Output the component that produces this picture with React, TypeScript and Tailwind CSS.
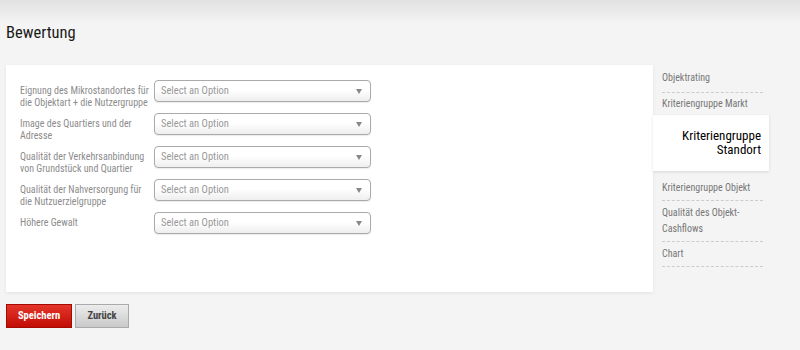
const rows = [
  'Eignung des Mikrostandortes für die Objektart + die Nutzergruppe',
  'Image des Quartiers und der Adresse',
  'Qualität der Verkehrsanbindung von Grundstück und Quartier',
  'Qualität der Nahversorgung für die Nutzuerzielgruppe',
  'Höhere Gewalt',
];

function SelectBox() {
  return (
    <div className="relative w-[217px] h-[22px] rounded-[4px] border border-[#aaa] bg-[linear-gradient(#ffffff,#ffffff_45%,#eeeeee)] shadow-[0_1px_1px_rgba(0,0,0,0.08)] flex items-center pl-[6px] text-[10.5px] text-[#999]">
      Select an Option
      <svg className="absolute right-[8px] top-[8px]" width="6" height="5" viewBox="0 0 6 5">
        <path d="M0 0h6L3 5z" fill="#888" />
      </svg>
    </div>
  );
}

export default function App() {
  return (
    <div className="min-h-[350px] bg-[linear-gradient(#e1e1e1,#f4f4f4_24px)] font-['Roboto_Condensed',sans-serif]">
      <h1 className="pl-[6px] pt-[22px] text-[16.5px] leading-[22px] text-[#1a1a1a]">Bewertung</h1>

      <div className="flex mt-[21px]">
        <div className="ml-[6px] w-[647px] h-[227px] bg-white shadow-[0_1px_3px_rgba(0,0,0,0.08)] pt-[15px] pl-[14px] flex flex-col gap-[11px]">
          {rows.map((label) => (
            <div key={label} className="flex h-[22px]">
              <div className="w-[134px] pt-[5px] text-[10px] leading-[12px] text-[#8c8c8c]">{label}</div>
              <SelectBox />
            </div>
          ))}
        </div>

        <div className="w-[116px] pl-[9px] text-[10px] text-[#777]">
          <div className="w-[101px] pt-[5px] pb-[6px] leading-[16px] border-b border-dashed border-[#ccc]">Objektrating</div>
          <div className="w-[101px] pt-[3px] pb-[3px] leading-[16px]">Kriteriengruppe Markt</div>
          <div className="-ml-[9px] w-[116px] h-[56px] bg-white shadow-[0_1px_3px_rgba(0,0,0,0.12)] pt-[14px] pr-[8px] text-right text-[13px] leading-[14px] text-black">
            Kriteriengruppe
            <br />
            Standort
          </div>
          <div className="w-[101px] pt-[9px] pb-[4px] leading-[16px] border-b border-dashed border-[#ccc]">Kriteriengruppe Objekt</div>
          <div className="w-[101px] py-[4px] leading-[16px] border-b border-dashed border-[#ccc]">
            Qualität des Objekt-
            <br />
            Cashflows
          </div>
          <div className="w-[101px] py-[4px] leading-[16px] border-b border-dashed border-[#ccc]">Chart</div>
        </div>
      </div>

      <div className="flex gap-[3px] ml-[6px] mt-[12px]">
        <button className="w-[66px] h-[24px] border border-[#a30a02] bg-[linear-gradient(#e4362b,#c20d04)] text-white text-[10.5px] font-bold">
          Speichern
        </button>
        <button className="w-[54px] h-[24px] border border-[#aaa] bg-[linear-gradient(#ececec,#c9c9c9)] text-[#444] text-[10.5px] font-bold">
          Zurück
        </button>
      </div>
    </div>
  );
}
